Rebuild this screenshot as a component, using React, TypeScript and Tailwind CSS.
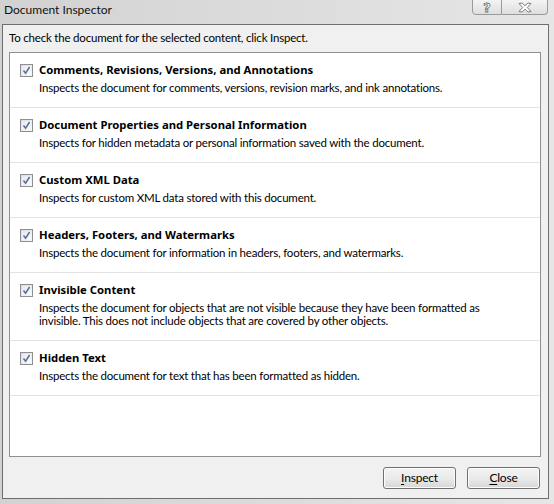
import React from 'react';

type Section = { title: string; lines: string[] };

const sections: Section[] = [
  {
    title: 'Comments, Revisions, Versions, and Annotations',
    lines: ['Inspects the document for comments, versions, revision marks, and ink annotations.'],
  },
  {
    title: 'Document Properties and Personal Information',
    lines: ['Inspects for hidden metadata or personal information saved with the document.'],
  },
  {
    title: 'Custom XML Data',
    lines: ['Inspects for custom XML data stored with this document.'],
  },
  {
    title: 'Headers, Footers, and Watermarks',
    lines: ['Inspects the document for information in headers, footers, and watermarks.'],
  },
  {
    title: 'Invisible Content',
    lines: [
      'Inspects the document for objects that are not visible because they have been formatted as',
      'invisible. This does not include objects that are covered by other objects.',
    ],
  },
  {
    title: 'Hidden Text',
    lines: ['Inspects the document for text that has been formatted as hidden.'],
  },
];

function CheckBox() {
  return (
    <div className="w-[13px] h-[13px] shrink-0 border border-[#8f8f8f] bg-gradient-to-br from-[#dcdcdc] to-[#f7f7f7] p-[1px]">
      <div className="w-full h-full bg-gradient-to-br from-[#e6e9f0] to-[#fafbfd] flex items-center justify-center">
        <svg width="9" height="9" viewBox="0 0 9 9">
          <path d="M1.5 4.5 L3.6 7.2 L7.6 1" fill="none" stroke="#5a6b9c" strokeWidth="1.5" />
        </svg>
      </div>
    </div>
  );
}

function DialogButton({ label }: { label: string }) {
  return (
    <button className="w-[73px] h-[22px] rounded-[3px] border border-[#707070] bg-gradient-to-b from-[#f2f2f2] via-[#ebebeb] to-[#d6d6d6] text-[12px] tracking-[-0.2px] text-black shadow-[inset_0_0_0_1px_#fcfcfc]">
      <span className="underline underline-offset-2">{label[0]}</span>
      {label.slice(1)}
    </button>
  );
}

function CaptionButtons() {
  return (
    <div className="flex self-start -mt-px">
      <div className="w-[30px] h-[16px] border border-[#9a9a9a] rounded-bl-[4px] bg-gradient-to-b from-[#f4f4f4] to-[#dedede] flex items-center justify-center">
        <span className="text-[13px] font-bold leading-none text-white [-webkit-text-stroke:0.8px_#6f6f6f] font-['DejaVu_Sans',sans-serif]">?</span>
      </div>
      <div className="w-[46px] h-[16px] border border-l-0 border-[#9a9a9a] rounded-br-[4px] bg-gradient-to-b from-[#f4f4f4] to-[#dedede] flex items-center justify-center">
        <svg width="14" height="11" viewBox="0 0 14 11">
          <path
            d="M1 1.5 L4 1 L7 3.8 L10 1 L13 1.5 L9.3 5.5 L13 9.5 L10 10 L7 7.2 L4 10 L1 9.5 L4.7 5.5 Z"
            fill="#ffffff"
            stroke="#6f6f6f"
            strokeWidth="0.9"
            strokeLinejoin="round"
          />
        </svg>
      </div>
    </div>
  );
}

export default function App() {
  return (
    <div className="w-[554px] h-[504px] bg-gradient-to-r from-[#d2d2d2] via-[#dcdcdc] to-[#e6e6e6] flex flex-col font-['Lato',sans-serif] text-black overflow-hidden">
      <div className="h-[24px] flex items-start justify-between pl-[4px] pr-[6px]">
        <span className="text-[12px] leading-[20px] text-[#111]">Document Inspector</span>
        <CaptionButtons />
      </div>

      <div className="ml-[2px] w-[547px] h-[475px] border border-[#6e6e6e] bg-[#f0f0f0] flex flex-col">
        <p className="pl-[6px] pt-[5px] text-[11.5px] tracking-[-0.2px] leading-[16px] whitespace-nowrap">
          To check the document for the selected content, click Inspect.
        </p>

        <div className="ml-[6px] mt-[6px] w-[532px] h-[405px] border border-[#8e8f8f] bg-white flex flex-col">
          {sections.map((s) => (
            <div key={s.title} className="border-b border-[#e3e3e3] pt-[9px] pb-[13px] pl-[10px] pr-2">
              <div className="flex items-center gap-[6px] h-[16px]">
                <CheckBox />
                <span className="text-[11.3px] font-bold leading-[16px] whitespace-nowrap font-['Noto_Sans',sans-serif]">
                  {s.title}
                </span>
              </div>
              <div className="pl-[19px] mt-[3px]">
                {s.lines.map((l) => (
                  <div key={l} className="text-[11.5px] tracking-[-0.2px] leading-[13px] text-black whitespace-nowrap">
                    {l}
                  </div>
                ))}
              </div>
            </div>
          ))}
        </div>

        <div className="flex justify-end gap-[11px] mt-[10px] pr-[8px]">
          <DialogButton label="Inspect" />
          <DialogButton label="Close" />
        </div>
      </div>
    </div>
  );
}
